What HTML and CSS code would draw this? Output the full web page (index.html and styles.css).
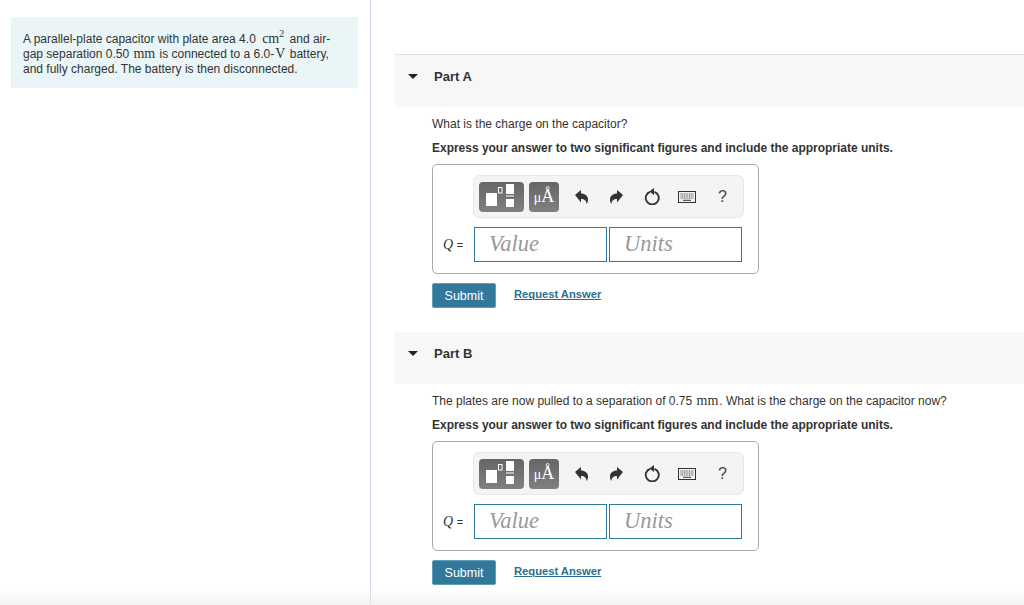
FILE: index.html
```html
<!DOCTYPE html>
<html lang="en">
<head>
    <meta charset="UTF-8">
    <meta name="viewport" content="width=device-width, initial-scale=1.0">
    <title>Capacitor problem</title>
    <link rel="stylesheet" href="styles.css">
</head>
<body>
    <div class="page">
        <div class="sidebar">
            <div class="intro">
                A parallel-plate capacitor with plate area 4.0 <span class="math math-gap">cm<sup>2</sup></span> and air-gap separation 0.50 <span class="math">mm</span> is connected to a 6.0-<span class="math">V</span> battery, and fully charged. The battery is then disconnected.
            </div>
        </div>

        <div class="main">
            <!-- Part A -->
            <div class="part part-first">
                <div class="part-header">
                    <span class="caret"></span>
                    <span class="part-title">Part A</span>
                </div>
                <div class="part-body">
                    <p class="question">What is the charge on the capacitor?</p>
                    <p class="instruction">Express your answer to two significant figures and include the appropriate units.</p>
                    <div class="answer-box">
                        <div class="toolbar">
                            <button class="tool-btn tool-templates" aria-label="Templates">
                                <svg width="45" height="30" viewBox="0 0 45 30"><rect x="7" y="11" width="11" height="13" fill="#fff"/><rect x="19.500" y="5.500" width="3.500" height="5.500" fill="none" stroke="#fff"/><rect x="27" y="2" width="8" height="10" fill="#fff"/><rect x="27" y="13.500" width="8" height="1" fill="#fff"/><rect x="27" y="17" width="8" height="8" fill="#fff"/></svg>
                            </button>
                            <button class="tool-btn tool-units"><span class="mu">μ</span><span class="angstrom">Å</span></button>
                            <div class="tool-icons">
                                <svg class="icon" width="13" height="14" viewBox="0 0 13 14"><path d="M0 5 6 0v3.500c4 0 7 2.500 7 6 0 2-.6 3.500-1.500 4.500.3-3-2-5-5.500-5v3.500z" fill="#333"/></svg>
                                <svg class="icon" width="13" height="14" viewBox="0 0 13 14"><path d="M13 5 7 0v3.500c-4 0-7 2.500-7 6 0 2 .6 3.500 1.500 4.500-.3-3 2-5 5.500-5v3.500z" fill="#333"/></svg>
                                <svg class="icon" width="16" height="17" viewBox="0 0 16 17"><path d="M6 3.800a6.500 6.500 0 1 0 4.500 0" fill="none" stroke="#333" stroke-width="1.900"/><path d="M10 0v7L5.500 3.500z" fill="#333"/></svg>
                                <svg class="icon" width="18" height="12" viewBox="0 0 18 12"><rect x=".5" y=".5" width="17" height="11" fill="#f2f2f2" stroke="#333"/><path d="M2.500 3h13M2.500 5h13M2.500 7h13" stroke="#444" stroke-dasharray="1 .7"/><path d="M5 9.300h8" stroke="#333"/></svg>
                                <span class="help">?</span>
                            </div>
                        </div>
                        <div class="answer-row">
                            <span class="answer-label"><i>Q</i> <span class="equals">=</span></span>
                            <input class="answer-input" type="text" placeholder="Value">
                            <input class="answer-input" type="text" placeholder="Units">
                        </div>
                    </div>
                    <div class="actions">
                        <button class="submit">Submit</button>
                        <a class="request" href="#">Request Answer</a>
                    </div>
                </div>
            </div>

            <!-- Part B -->
            <div class="part">
                <div class="part-header">
                    <span class="caret"></span>
                    <span class="part-title">Part B</span>
                </div>
                <div class="part-body">
                    <p class="question">The plates are now pulled to a separation of 0.75 <span class="math">mm</span>. What is the charge on the capacitor now?</p>
                    <p class="instruction">Express your answer to two significant figures and include the appropriate units.</p>
                    <div class="answer-box">
                        <div class="toolbar">
                            <button class="tool-btn tool-templates" aria-label="Templates">
                                <svg width="45" height="30" viewBox="0 0 45 30"><rect x="7" y="11" width="11" height="13" fill="#fff"/><rect x="19.500" y="5.500" width="3.500" height="5.500" fill="none" stroke="#fff"/><rect x="27" y="2" width="8" height="10" fill="#fff"/><rect x="27" y="13.500" width="8" height="1" fill="#fff"/><rect x="27" y="17" width="8" height="8" fill="#fff"/></svg>
                            </button>
                            <button class="tool-btn tool-units"><span class="mu">μ</span><span class="angstrom">Å</span></button>
                            <div class="tool-icons">
                                <svg class="icon" width="13" height="14" viewBox="0 0 13 14"><path d="M0 5 6 0v3.500c4 0 7 2.500 7 6 0 2-.6 3.500-1.500 4.500.3-3-2-5-5.500-5v3.500z" fill="#333"/></svg>
                                <svg class="icon" width="13" height="14" viewBox="0 0 13 14"><path d="M13 5 7 0v3.500c-4 0-7 2.500-7 6 0 2 .6 3.500 1.500 4.500-.3-3 2-5 5.500-5v3.500z" fill="#333"/></svg>
                                <svg class="icon" width="16" height="17" viewBox="0 0 16 17"><path d="M6 3.800a6.500 6.500 0 1 0 4.500 0" fill="none" stroke="#333" stroke-width="1.900"/><path d="M10 0v7L5.500 3.500z" fill="#333"/></svg>
                                <svg class="icon" width="18" height="12" viewBox="0 0 18 12"><rect x=".5" y=".5" width="17" height="11" fill="#f2f2f2" stroke="#333"/><path d="M2.500 3h13M2.500 5h13M2.500 7h13" stroke="#444" stroke-dasharray="1 .7"/><path d="M5 9.300h8" stroke="#333"/></svg>
                                <span class="help">?</span>
                            </div>
                        </div>
                        <div class="answer-row">
                            <span class="answer-label"><i>Q</i> <span class="equals">=</span></span>
                            <input class="answer-input" type="text" placeholder="Value">
                            <input class="answer-input" type="text" placeholder="Units">
                        </div>
                    </div>
                    <div class="actions">
                        <button class="submit">Submit</button>
                        <a class="request" href="#">Request Answer</a>
                    </div>
                </div>
            </div>
        </div>
    </div>
    <div class="bottom-fade"></div>
</body>
</html>
```

FILE: styles.css
```css
body {
    margin: 0;
    font-family: "Liberation Sans", Arial, sans-serif;
    font-size: 12px;
    color: #333;
    background-color: white;
    overflow: hidden;
}
.page {
    display: flex;
    height: 605px;
}
.sidebar {
    box-sizing: border-box;
    width: 371px;
    padding: 17px 12px 0 11px;
    border-right: 1px solid #d3dcea;
}
.intro {
    height: 71px;
    box-sizing: border-box;
    padding: 15px 20px 0 12px;
    background-color: #e9f5f7;
    line-height: 15px;
    color: #333;
}
.math {
    margin: 0 1px;
    font-family: "Liberation Serif", "Times New Roman", serif;
    font-size: 14px;
    line-height: 0;
}
.math-gap {
    margin: 0 2px 0 3px;
}
.math sup {
    font-size: 10px;
    line-height: 0;
}
.main {
    flex: 1;
    padding: 54px 0 0 24px;
}
.part-header {
    display: flex;
    align-items: flex-start;
    height: 52px;
    box-sizing: border-box;
    padding: 14px 0 0 13px;
    background-color: #f7f7f7;
}
.part-first .part-header {
    border-top: 1px solid #e0e0e0;
    height: 53px;
}
.part-first .part-body {
    height: 215px;
}
.caret {
    width: 0;
    height: 0;
    margin: 5px 16px 0 0;
    border-left: 5px solid transparent;
    border-right: 5px solid transparent;
    border-top: 5px solid #222;
}
.part-title {
    font-weight: bold;
    font-size: 13px;
}
.part-body {
    padding: 10px 0 0 37px;
}
.question {
    margin: 0 0 9px;
    line-height: 15px;
}
.instruction {
    margin: 0 0 8px;
    line-height: 15px;
    font-size: 11.970px;
    font-weight: bold;
}
.answer-box {
    box-sizing: border-box;
    width: 327px;
    height: 110px;
    padding: 10px 14px 0 40px;
    border: 1px solid #aaa;
    border-radius: 5px;
    background-color: white;
}
.toolbar {
    display: flex;
    align-items: center;
    box-sizing: border-box;
    width: 271px;
    height: 43px;
    padding: 0 5px;
    background-color: #f4f4f4;
    border: 1px solid #e8e8e8;
    border-radius: 6px;
}
.tool-btn {
    flex-shrink: 0;
    height: 30px;
    padding: 0;
    margin-right: 5px;
    border: none;
    border-radius: 4px;
    background: linear-gradient(#666, #808080);
    color: white;
}
.tool-templates {
    width: 45px;
}
.tool-templates svg {
    display: block;
}
.tool-units {
    width: 30px;
    font-family: "Liberation Serif", "Times New Roman", serif;
}
.mu {
    font-size: 14px;
}
.angstrom {
    font-size: 18px;
}
.tool-icons {
    display: grid;
    grid-template-columns: repeat(5, 35.200px);
    justify-items: center;
    align-items: center;
}
.icon {
    display: block;
}
.help {
    font-size: 16px;
    line-height: 16px;
    color: #444;
}
.answer-row {
    display: flex;
    align-items: center;
    gap: 2px;
    margin-top: 9px;
    margin-left: -30px;
}
.answer-label {
    width: 29px;
    font-family: "Liberation Serif", "Times New Roman", serif;
    font-size: 14px;
    white-space: nowrap;
}
.equals {
    font-family: "Liberation Sans", Arial, sans-serif;
    font-size: 11px;
}
.answer-input {
    box-sizing: border-box;
    width: 133px;
    height: 35px;
    padding: 0 14px 1px 14px;
    border: 1px solid #2f7a9c;
    outline: none;
    font-family: "Liberation Serif", "Times New Roman", serif;
    font-size: 22.500px;
    font-style: italic;
}
.answer-input::placeholder {
    color: #999;
}
.actions {
    display: flex;
    align-items: center;
    margin-top: 9px;
}
.submit {
    width: 64px;
    height: 25px;
    padding: 0;
    border: 1px solid #5f9db8;
    border-radius: 2px;
    background-color: #32789b;
    color: white;
    font-family: "Liberation Sans", Arial, sans-serif;
    font-size: 12.500px;
}
.request {
    margin: -3px 0 0 18px;
    color: #2a6f90;
    font-size: 11.200px;
    font-weight: bold;
    text-decoration: underline;
}
.bottom-fade {
    position: fixed;
    left: 0;
    right: 0;
    bottom: 0;
    height: 16px;
    background: linear-gradient(rgba(240, 240, 240, 0), rgba(236, 236, 236, 0.7));
    pointer-events: none;
}
```
